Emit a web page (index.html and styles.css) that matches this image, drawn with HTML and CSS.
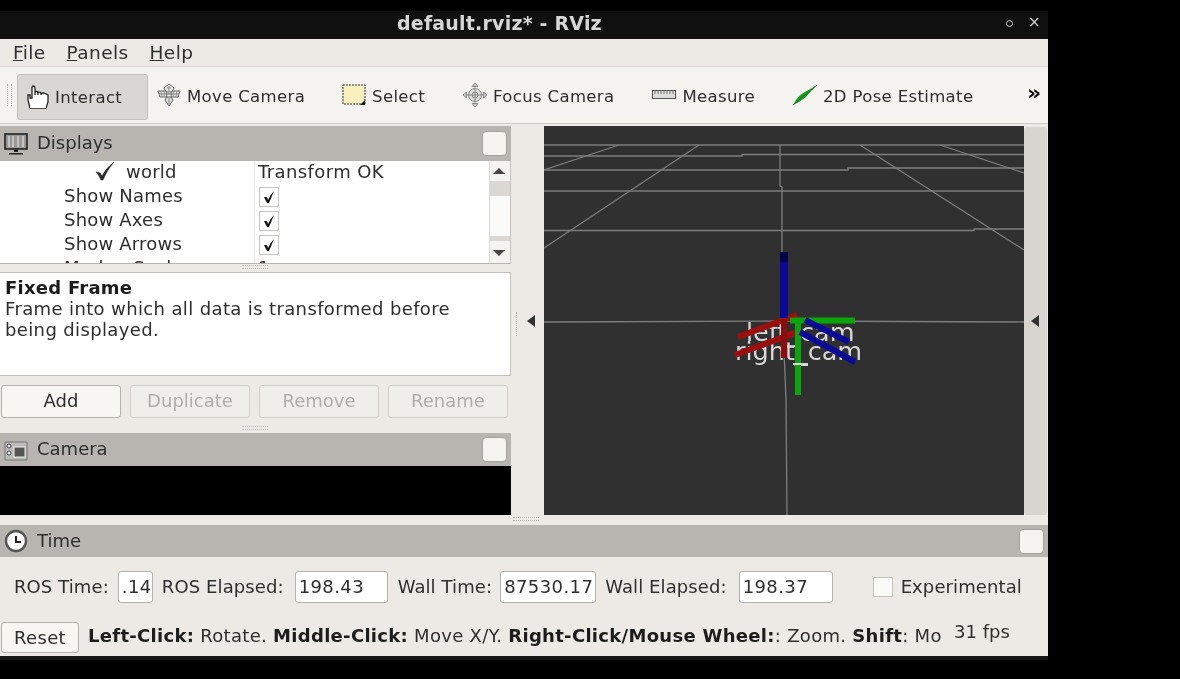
FILE: index.html
```html
<!DOCTYPE html>
<html lang="en">
<head>
    <meta charset="UTF-8">
    <title>default.rviz* - RViz</title>
    <link rel="stylesheet" href="styles.css">
</head>
<body>
    <div class="window">
        <header class="titlebar">
            <span class="title">default.rviz* - RViz</span>
            <span class="win-btn win-max"></span>
            <span class="win-btn win-close">×</span>
        </header>
        <nav class="menubar">
            <span class="menu"><u>F</u>ile</span>
            <span class="menu"><u>P</u>anels</span>
            <span class="menu"><u>H</u>elp</span>
        </nav>
        <div class="toolbar">
            <span class="tool-grip"></span>
            <div class="tool tool-active">
                <svg class="icon" viewBox="0 0 24 24" width="24" height="24"><path d="M5 23 L3 15 V10 H5 V13 H7 V3 Q7 1 8.500 1 Q10 1 10 3 V10 V7 Q11 6 12.500 6.500 L13 10 V7.500 Q15 6.500 16 8 V10 V8.500 Q18 7.500 20 8.500 L23 10 V17 L21 23 Z" fill="#fff" stroke="#222" stroke-width="1.300"/><path d="M5 18 H21 V23 H5 Z" fill="#fff"/></svg>
                <span>Interact</span>
            </div>
            <div class="tool tool-move">
                <svg class="icon" viewBox="0 0 24 24" width="24" height="24" fill="none" stroke="#666" stroke-width="1"><path d="M12 1 L17 5 L15 9 H9 L7 5 Z" fill="#eee"/><path d="M8 17 L12 23 L16 17 L14 14 H10 Z" fill="#ddd"/><path d="M1 8 H9 L10 14 H3 Z M23 8 H15 L14 14 H21 Z" fill="#eee"/><path d="M4 8 L5 14 M7 8 L7.500 14 M20 8 L19 14 M17 8 L16.500 14 M9.500 11 H14.500 M2 11 H22 M10 5 H14 M12 3 V9 M12 15 V21" stroke="#888"/></svg>
                <span>Move Camera</span>
            </div>
            <div class="tool tool-select">
                <svg class="icon" viewBox="0 0 24 24" width="24" height="24"><rect x="1" y="2" width="22" height="19" fill="#f8f1bd" stroke="#333" stroke-dasharray="2 1"/><path d="M23 17 V22 H18 Z" fill="#111"/></svg>
                <span>Select</span>
            </div>
            <div class="tool tool-focus">
                <svg class="icon" viewBox="0 0 24 24" width="24" height="24" fill="none" stroke="#888"><circle cx="12" cy="12" r="6.500" fill="#ddd"/><path d="M12 0 L15 3.500 H9 Z M12 24 L15 20.500 H9 Z M0 12 L3.500 9 V15 Z M24 12 L20.500 9 V15 Z" fill="#ccc"/><path d="M12 3 V21 M3 12 H21"/><circle cx="12" cy="12" r="3"/></svg>
                <span>Focus Camera</span>
            </div>
            <div class="tool tool-measure">
                <svg class="icon" viewBox="0 0 24 24" width="24" height="24"><rect x="0.500" y="7.500" width="23" height="8" fill="#ddd" stroke="#555"/><path d="M3 8 V11 M6 8 V11 M9 8 V11 M12 8 V11 M15 8 V11 M18 8 V11 M21 8 V11" stroke="#777"/></svg>
                <span>Measure</span>
            </div>
            <div class="tool tool-pose">
                <svg class="icon" viewBox="0 0 26 24" width="26" height="24"><path d="M1 22 Q6 12 13 9 L25 2 Q18 9 14 14 Q8 19 1 22 Z" fill="#14a01e"/><path d="M1 22 L25 2" stroke="#2f4a33" stroke-width="0.700"/></svg>
                <span>2D Pose Estimate</span>
            </div>
            <span class="more">»</span>
        </div>
        <div class="main">
            <div class="left-dock">
                <div class="dock-head dock-displays">
                    <svg class="icon" viewBox="0 0 24 24" width="24" height="24"><rect x="1" y="2" width="22" height="15" fill="#999" stroke="#222" stroke-width="1.600"/><path d="M5 4 V15 M9 4 V15 M14 4 V15 M19 4 V15" stroke="#c4c4c4" stroke-width="2"/><path d="M10 17 H14 V20 H10 Z M5 21 H19 V22.500 H5 Z" fill="#222"/></svg>
                    <span class="dock-title">Displays</span>
                    <span class="dock-btn"></span>
                </div>
                <div class="tree">
                    <div class="tree-rows">
                        <div class="row">
                            <div class="prop prop-world"><svg class="tick" viewBox="0 0 20 20" width="20" height="20"><path d="M1 11 L5 12 L7 15 Q11 7 19 1 Q12 9 8 19 H6 Q4 14 1 11 Z" fill="#2a2a2a" stroke="#2a2a2a" stroke-width="0.600"/></svg>world</div>
                            <div class="val">Transform OK</div>
                        </div>
                        <div class="row"><div class="prop">Show Names</div><div class="val"><span class="check"><svg viewBox="0 0 14 14" width="14" height="14"><path d="M2 7 L5 7 L6 10 Q8 5 12 1 L7 13 H5 Z" fill="#111"/></svg></span></div></div>
                        <div class="row"><div class="prop">Show Axes</div><div class="val"><span class="check"><svg viewBox="0 0 14 14" width="14" height="14"><path d="M2 7 L5 7 L6 10 Q8 5 12 1 L7 13 H5 Z" fill="#111"/></svg></span></div></div>
                        <div class="row"><div class="prop">Show Arrows</div><div class="val"><span class="check"><svg viewBox="0 0 14 14" width="14" height="14"><path d="M2 7 L5 7 L6 10 Q8 5 12 1 L7 13 H5 Z" fill="#111"/></svg></span></div></div>
                        <div class="row"><div class="prop">Marker Scale</div><div class="val">1</div></div>
                    </div>
                    <div class="scrollbar">
                        <span class="arrow-up"></span>
                        <span class="thumb"></span>
                        <span class="arrow-down"></span>
                    </div>
                </div>
                <div class="grip-h"></div>
                <div class="desc">
                    <b>Fixed Frame</b><br>
                    Frame into which all data is transformed before being displayed.
                </div>
                <div class="actions">
                    <button class="btn">Add</button>
                    <button class="btn" disabled>Duplicate</button>
                    <button class="btn" disabled>Remove</button>
                    <button class="btn" disabled>Rename</button>
                </div>
                <div class="grip-h grip-low"></div>
                <div class="dock-head dock-camera">
                    <svg class="icon" viewBox="0 0 24 24" width="24" height="24"><path d="M1 4 H23 V22 H1 Z" fill="#bbb" stroke="#777"/><rect x="10" y="9" width="11" height="10" fill="#555" stroke="#eee"/><circle cx="5" cy="8" r="2" fill="#eee" stroke="#444"/><circle cx="5" cy="15" r="2" fill="#eee" stroke="#444"/></svg>
                    <span class="dock-title">Camera</span>
                    <span class="dock-btn"></span>
                </div>
                <div class="camera-view"></div>
            </div>
            <div class="split-bar">
                <span class="arrow-left"></span>
                <span class="grip-v"></span>
            </div>
            <svg class="view3d" viewBox="544 126 480 389" width="480" height="389">
                <g class="grid">
                    <path d="M544 145 H1024"/>
                    <path d="M544 156 H742 V154.500 H1024"/>
                    <path d="M544 170 H848 V168 H1024"/>
                    <path d="M544 191 H1024"/>
                    <path d="M544 230.500 H974 V229 H1024"/>
                    <path d="M544 322 L782 321 L1024 322"/>
                    <path d="M544 170 L619 145"/>
                    <path d="M544 248 L699 145"/>
                    <path d="M860 145 L1024 250"/>
                    <path d="M940 145 L1024 173"/>
                    <path d="M780 145 V186 L782 187 V320 L784 350 L786 400 L787 515"/>
                </g>
                <text class="frame-label" x="746" y="341">left_cam</text>
                <text class="frame-label" x="735" y="360">right_cam</text>
                <g fill="none" stroke-width="6">
                    <path d="M738 337 L797 315" stroke="#9c0f0f"/>
                    <path d="M735 355 L800 331" stroke="#9c0f0f"/>
                    <path d="M784 320 V358" stroke="#8a0e0e"/>
                    <path d="M790 320.500 H855" stroke="#0aa50a"/>
                    <path d="M798 320 V395" stroke="#0aa50a"/>
                    <path d="M805 320 L849 342" stroke="#0a0a96"/>
                    <path d="M800 332 L855 362" stroke="#0a0a96"/>
                    <path d="M784 252 V318" stroke="#0a0a96" stroke-width="8"/>
                    <path d="M784 252 V262" stroke="#00004a" stroke-width="8"/>
                    <path d="M793 364 H808" stroke="#d8d8d8" stroke-width="2"/>
                </g>
            </svg>
            <div class="collapse-right"><span class="arrow-left"></span></div>
        </div>
        <div class="grip-h grip-main"></div>
        <div class="dock-head dock-time">
            <svg class="icon" viewBox="0 0 24 24" width="24" height="24"><circle cx="12" cy="12" r="10" fill="#fff" stroke="#555" stroke-width="2.400"/><path d="M12 7 V13 H17" fill="none" stroke="#222" stroke-width="2"/></svg>
            <span class="dock-title">Time</span>
            <span class="dock-btn"></span>
        </div>
        <div class="time-row">
            <label>ROS Time:</label><span class="field field-ros">.14</span>
            <label>ROS Elapsed:</label><span class="field field-elapsed">198.43</span>
            <label>Wall Time:</label><span class="field field-wall">87530.17</span>
            <label>Wall Elapsed:</label><span class="field field-elapsed field-last">198.37</span>
            <span class="exp-box"></span><label>Experimental</label>
        </div>
        <div class="status">
            <button class="btn btn-reset">Reset</button>
            <div class="hint"><b>Left-Click:</b> Rotate. <b>Middle-Click:</b> Move X/Y. <b>Right-Click/Mouse Wheel:</b>: Zoom. <b>Shift</b>: Mo</div>
            <div class="fps">31 fps</div>
        </div>
        <div class="window-foot"></div>
    </div>
</body>
</html>
```

FILE: styles.css
```css
body {
    margin: 0;
    background-color: #000;
    font-family: "DejaVu Sans", sans-serif;
    font-size: 18px;
    color: #2e2e2e;
    overflow: hidden;
}

.window {
    width: 1048px;
    margin-top: 11px;
    background-color: #edeae5;
    filter: blur(0.4px);
}

.icon {
    flex: none;
}

/* title bar */
.titlebar {
    height: 28px;
    background-color: #101010;
    color: #d6d6d6;
    display: flex;
    align-items: center;
    position: relative;
}

.title {
    margin-left: 397px;
    padding-bottom: 4px;
    font-size: 19px;
    font-weight: bold;
    letter-spacing: 0.2px;
}

.win-btn {
    position: absolute;
    color: #ccc;
}

.win-max {
    left: 1006px;
    top: 9px;
    width: 5px;
    height: 5px;
    border: 1.5px solid #ccc;
    border-radius: 50%;
}

.win-close {
    left: 1028px;
    top: 2px;
    font-size: 15px;
}

/* menu */
.menubar {
    height: 27px;
    border-bottom: 1px solid #dcd9d4;
    display: flex;
    align-items: center;
    padding-left: 13px;
    gap: 21px;
    font-size: 18.500px;
    letter-spacing: 0.4px;
}

/* toolbar */
.toolbar {
    height: 56px;
    border-bottom: 1px solid #cfccc7;
    background-color: #f5f3ef;
    display: flex;
    align-items: center;
    font-size: 16.500px;
    letter-spacing: 0.35px;
    position: relative;
}

.tool-grip {
    width: 5px;
    height: 22px;
    margin-left: 7px;
    border-left: 1px dotted #bbb;
    border-right: 1px dotted #bbb;
    box-sizing: border-box;
}

.tool {
    display: flex;
    align-items: center;
    gap: 6px;
}

.tool span {
    padding-top: 2px;
}

.tool-active {
    margin: 3px 0 0 5px;
    width: 131px;
    height: 46px;
    box-sizing: border-box;
    padding-left: 7px;
    background-color: #d9d7d3;
    border: 1px solid #c4c1bc;
    border-radius: 3px;
}

.tool-move { margin-left: 9px; }
.tool-select { margin-left: 37px; }
.tool-focus { margin-left: 38px; }
.tool-measure { margin-left: 38px; }
.tool-pose { margin-left: 37px; gap: 5px; }

.more {
    position: absolute;
    left: 1027px;
    top: 13px;
    font-size: 22px;
    font-weight: bold;
    color: #111;
}

/* main area */
.main {
    height: 391px;
    display: flex;
}

.left-dock {
    width: 511px;
    padding-top: 2px;
    box-sizing: border-box;
    display: flex;
    flex-direction: column;
}

.dock-head {
    flex: none;
    background-color: #b8b4af;
    display: flex;
    align-items: center;
    padding-left: 4px;
    gap: 9px;
    box-sizing: border-box;
}

.dock-displays {
    height: 35px;
}

.dock-camera {
    height: 33px;
}

.dock-time {
    height: 32px;
}

.dock-title {
    flex: 1;
    padding-bottom: 2px;
}

.dock-btn {
    width: 25px;
    height: 25px;
    margin-right: 4px;
    background-color: #f4f3f0;
    border: 1px solid #a5a19c;
    border-radius: 4px;
    box-sizing: border-box;
}

/* property tree */
.tree {
    height: 103px;
    flex: none;
    display: flex;
    background-color: #fff;
    border-bottom: 1px solid #b8b5b0;
    box-sizing: border-box;
    overflow: hidden;
    border-right: 1px solid #c4c1bc;
}

.tree-rows {
    width: 489px;
    flex: none;
}

.row {
    height: 24px;
    display: flex;
    align-items: flex-start;
}

.prop {
    width: 190px;
    padding-left: 64px;
    border-right: 1px solid #e4e2de;
    height: 24px;
    line-height: 22px;
    flex: none;
    letter-spacing: 0.2px;
}

.prop-world {
    padding-left: 95px;
    width: 159px;
    display: flex;
    align-items: flex-start;
    gap: 11px;
}

.tick {
    flex: none;
}

.val {
    padding-left: 3px;
    height: 24px;
    line-height: 22px;
    letter-spacing: 0.4px;
}

.check {
    display: flex;
    align-items: center;
    justify-content: center;
    width: 20px;
    height: 20px;
    margin: 2px 0 0 1px;
    box-sizing: border-box;
    border: 1px solid #c8c5c0;
}

.scrollbar {
    flex: 1;
    background-color: #f4f3f0;
    border-left: 1px solid #dcd9d4;
    position: relative;
}

.thumb {
    position: absolute;
    left: 0;
    right: 0;
    top: 20px;
    height: 60px;
    background-color: #fafafa;
    border-top: 15px solid #dbd8d4;
    border-bottom: 5px solid #dbd8d4;
    box-sizing: border-box;
}

.arrow-up,
.arrow-down {
    position: absolute;
    left: 3px;
    width: 0;
    height: 0;
    border-left: 6px solid transparent;
    border-right: 6px solid transparent;
}

.arrow-up {
    top: 7px;
    border-bottom: 6px solid #444;
}

.arrow-down {
    bottom: 7px;
    border-top: 6px solid #444;
}

.grip-h {
    height: 8px;
    flex: none;
    position: relative;
}

.grip-h::after {
    content: "";
    position: absolute;
    left: 242px;
    top: 1px;
    width: 26px;
    height: 2px;
    border-top: 1px dotted #bbb;
    border-bottom: 1px dotted #bbb;
}

.desc {
    height: 104px;
    flex: none;
    box-sizing: border-box;
    background-color: #fff;
    border: 1px solid #c4c1bc;
    border-left: none;
    padding: 4px 40px 0 5px;
    line-height: 21px;
    letter-spacing: 0.37px;
}

.desc b {
    color: #1c1c1c;
    letter-spacing: 0.25px;
}

/* buttons */
.actions {
    flex: none;
    display: flex;
    gap: 9px;
    padding: 9px 0 0 1px;
}

.btn {
    width: 120px;
    height: 33px;
    padding: 0 0 2px;
    font-family: inherit;
    font-size: 18px;
    color: #2e2e2e;
    background-color: #f7f6f3;
    border: 1px solid #b5b2ad;
    border-radius: 3px;
}

.btn:disabled {
    color: #b0aeaa;
    background-color: #f0eeea;
    border-color: #d2cfca;
}

.grip-low {
    height: 15px;
}

.grip-low::after {
    top: 8px;
}

.camera-view {
    flex: 1;
    background-color: #000;
}

/* splitter and 3d view */
.split-bar {
    width: 33px;
    position: relative;
}

.arrow-left {
    position: absolute;
    top: 191px;
    left: 16px;
    width: 0;
    height: 0;
    border-top: 6px solid transparent;
    border-bottom: 6px solid transparent;
    border-right: 8px solid #333;
}

.grip-v {
    position: absolute;
    left: 5px;
    top: 188px;
    width: 2px;
    height: 24px;
    border-left: 1px dotted #bbb;
}

.view3d {
    display: block;
    flex: none;
    margin-top: 2px;
    background-color: #303030;
}

.grid path {
    fill: none;
    stroke: #7d7d7d;
    stroke-width: 1.300;
}

.frame-label {
    font-family: "DejaVu Sans", sans-serif;
    font-size: 25.500px;
    fill: #d8d8d8;
}

.collapse-right {
    width: 23px;
    margin-top: 3px;
    background-color: #d8d5d1;
    border-radius: 3px;
    position: relative;
}

.collapse-right .arrow-left {
    left: 7px;
    top: 188px;
}

.grip-main {
    height: 10px;
}

.grip-main::after {
    left: 513px;
    top: 2px;
}

/* time panel */
.time-row {
    height: 63px;
    display: flex;
    align-items: center;
    padding: 0 0 3px 14px;
    box-sizing: border-box;
    letter-spacing: 0.1px;
}

.time-row label {
    padding-bottom: 2px;
}

.field {
    height: 32px;
    line-height: 29px;
    box-sizing: border-box;
    background-color: #fff;
    border: 1px solid #b5b2ad;
    border-radius: 3px;
    padding-left: 3px;
    margin-left: 9px;
    margin-right: 9px;
    overflow: hidden;
    white-space: nowrap;
    letter-spacing: 0.4px;
}

.field-ros {
    width: 35px;
    text-align: right;
    padding-right: 5px;
}

.field-elapsed {
    width: 93px;
    margin-left: 11px;
    margin-right: 10px;
}

.field-last {
    margin-left: 12px;
    width: 94px;
}

.field-wall {
    width: 96px;
    margin-left: 8px;
}

.exp-box {
    width: 20px;
    height: 20px;
    margin-left: 30px;
    margin-right: 8px;
    background-color: #fbfaf8;
    border: 1px solid #c4c1bc;
    box-sizing: border-box;
}

/* status line */
.status {
    height: 36px;
    display: flex;
    align-items: flex-start;
    padding-left: 1px;
    position: relative;
}

.btn-reset {
    width: 78px;
    height: 31px;
    flex: none;
    margin-top: 2px;
    padding: 0;
    letter-spacing: 0.3px;
}

.hint {
    margin-left: 9px;
    width: 854px;
    overflow: hidden;
    white-space: nowrap;
    line-height: 31px;
    letter-spacing: 0.3px;
}

.hint b {
    color: #1c1c1c;
}

.fps {
    margin-left: 12px;
    line-height: 24px;
    white-space: nowrap;
}

.window-foot {
    height: 4px;
    background-color: #161616;
}
```
